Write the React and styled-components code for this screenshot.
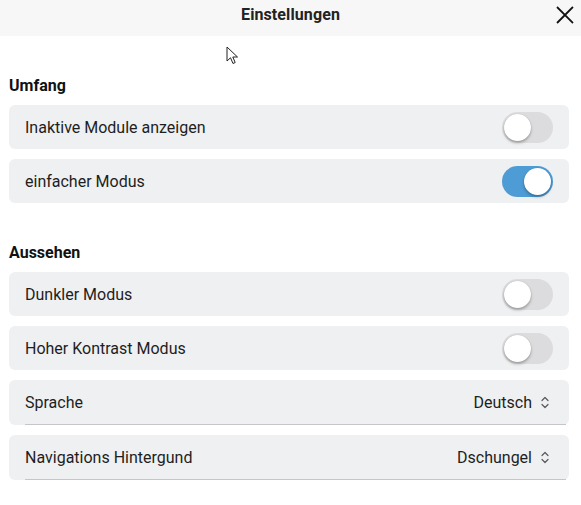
import React, { useState } from "react";
import styled, { createGlobalStyle } from "styled-components";

const GlobalStyle = createGlobalStyle`
  html, body {
    margin: 0;
    padding: 0;
    background: #ffffff;
    font-family: Roboto, "Liberation Sans", sans-serif;
    color: #1f1f1f;
  }
`;

const Page = styled.div`
  position: relative;
  width: 581px;
  height: 505px;
  overflow: hidden;
  background: #fff;
`;

const Header = styled.header`
  height: 36px;
  box-sizing: border-box;
  padding-bottom: 7px;
  background: #f7f7f7;
  display: flex;
  align-items: center;
  justify-content: center;
  position: relative;
`;

const Title = styled.h1`
  margin: 0;
  font-size: 16px;
  font-weight: 700;
  color: #222;
  letter-spacing: 0.1px;
`;

const Close = styled.button`
  position: absolute;
  right: 3px;
  top: 2px;
  width: 26px;
  height: 26px;
  border: 0;
  background: none;
  padding: 0;
  display: flex;
  align-items: center;
  justify-content: center;
`;

const Content = styled.main`
  padding: 40px 12px 0 9px;
`;

const Section = styled.section`
  display: flex;
  flex-direction: column;
  gap: 10px;
  margin-bottom: 40px;
`;

const SectionTitle = styled.h2`
  margin: 0 0 -1px;
  font-size: 16px;
  font-weight: 700;
  color: #111;
  height: 20px;
  line-height: 20px;
`;

const Row = styled.div`
  position: relative;
  height: ${(p) => (p.$lined ? "45px" : "44px")};
  box-sizing: border-box;
  background: #eff0f2;
  border-radius: 6px;
  display: flex;
  align-items: center;
  justify-content: space-between;
  padding: 0 16px;
  font-size: 16px;
  color: #1e1e1e;

  ${(p) =>
    p.$lined &&
    `
    &::after {
      content: "";
      position: absolute;
      left: 16px;
      right: 3px;
      bottom: 0;
      height: 1px;
      background: #c6c6ca;
    }
  `}
`;

const Track = styled.button`
  position: relative;
  width: 51px;
  height: 31px;
  border: 0;
  padding: 0;
  border-radius: 16px;
  background: ${(p) => (p.$on ? "#4d9cd6" : "#dcdcde")};
  cursor: pointer;
`;

const Knob = styled.span`
  position: absolute;
  top: 2px;
  left: ${(p) => (p.$on ? "22px" : "2px")};
  width: 27px;
  height: 27px;
  border-radius: 50%;
  background: #fff;
  box-shadow: 0 2px 3px rgba(0, 0, 0, 0.28), 0 0 1px rgba(0, 0, 0, 0.2);
`;

const SelectValue = styled.div`
  display: flex;
  align-items: center;
  gap: 7px;
  margin-right: 2px;
`;

const Cursor = styled.svg`
  position: absolute;
  left: 226px;
  top: 46px;
`;

const Toggle = ({ initial }) => {
  const [on, setOn] = useState(initial);
  return (
    <Track $on={on} onClick={() => setOn(!on)}>
      <Knob $on={on} />
    </Track>
  );
};

const Chevrons = () => (
  <svg width="12" height="13" viewBox="0 0 24 26" fill="none" stroke="#5a5a5a" strokeWidth="2.4" strokeLinecap="round" strokeLinejoin="round">
    <path d="M6 9l6-6 6 6" />
    <path d="M6 17l6 6 6-6" />
  </svg>
);

export default function App() {
  return (
    <Page>
      <GlobalStyle />
      <Header>
        <Title>Einstellungen</Title>
        <Close aria-label="Schließen">
          <svg width="22" height="22" viewBox="0 0 24 24" stroke="#111" strokeWidth="2" strokeLinecap="square">
            <path d="M4 4l16 16M20 4L4 20" />
          </svg>
        </Close>
      </Header>
      <Content>
        <Section>
          <SectionTitle>Umfang</SectionTitle>
          <Row>
            Inaktive Module anzeigen
            <Toggle initial={false} />
          </Row>
          <Row>
            einfacher Modus
            <Toggle initial={true} />
          </Row>
        </Section>
        <Section>
          <SectionTitle>Aussehen</SectionTitle>
          <Row>
            Dunkler Modus
            <Toggle initial={false} />
          </Row>
          <Row>
            Hoher Kontrast Modus
            <Toggle initial={false} />
          </Row>
          <Row $lined>
            Sprache
            <SelectValue>
              Deutsch <Chevrons />
            </SelectValue>
          </Row>
          <Row $lined>
            Navigations Hintergund
            <SelectValue>
              Dschungel <Chevrons />
            </SelectValue>
          </Row>
        </Section>
      </Content>
      <Cursor width="13" height="20" viewBox="0 0 13 20">
        <path d="M1 1 L1 15 L4.5 11.8 L7 17.5 L9.2 16.5 L6.8 11 L11.5 11 Z" fill="#fff" stroke="#222" strokeWidth="1" strokeLinejoin="miter" />
      </Cursor>
    </Page>
  );
}
